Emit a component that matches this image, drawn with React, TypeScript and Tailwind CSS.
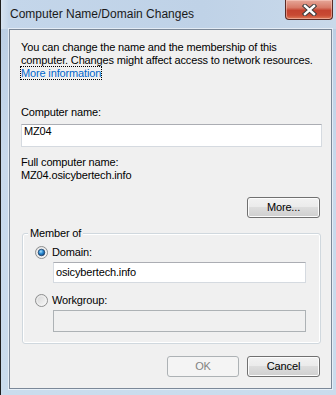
import React from "react";

function Radio({ checked }: { checked?: boolean }) {
  return (
    <svg width="13" height="13" viewBox="0 0 13 13" className="shrink-0">
      <defs>
        <linearGradient id={checked ? "rbg1" : "rbg0"} x1="0" y1="0" x2="1" y2="1">
          <stop offset="0" stopColor="#d2d2d2" />
          <stop offset="1" stopColor="#fbfbfb" />
        </linearGradient>
        <radialGradient id="rdot" cx="0.4" cy="0.35" r="0.7">
          <stop offset="0" stopColor="#a9e0fb" />
          <stop offset="0.45" stopColor="#2f8fd6" />
          <stop offset="1" stopColor="#0c3f7a" />
        </radialGradient>
      </defs>
      <circle cx="6.5" cy="6.5" r="6" fill={`url(#${checked ? "rbg1" : "rbg0"})`} stroke="#8e8f8f" strokeWidth="1" />
      <circle cx="6.5" cy="6.5" r="4.6" fill="none" stroke="#f4f4f4" strokeWidth="0.8" />
      {checked && <circle cx="6.5" cy="6.5" r="3.3" fill="url(#rdot)" stroke="#1b3a5e" strokeWidth="0.7" />}
    </svg>
  );
}

function WinButton({ label, disabled, className = "" }: { label: string; disabled?: boolean; className?: string }) {
  if (disabled) {
    return (
      <div
        className={`h-[21px] rounded-[3px] border border-[#adb2b5] bg-[#f4f4f4] flex items-center justify-center text-[#838383] ${className}`}
      >
        {label}
      </div>
    );
  }
  return (
    <div
      className={`h-[21px] rounded-[3px] border border-[#707070] bg-[linear-gradient(to_bottom,#f2f2f2_0%,#ebebeb_45%,#dddddd_50%,#cfcfcf_100%)] shadow-[inset_0_0_0_1px_#fcfcfc] flex items-center justify-center text-black ${className}`}
    >
      {label}
    </div>
  );
}

export default function App() {
  return (
    <div className="w-[336px] h-[395px] overflow-hidden flex flex-col border-l border-[#1e1e1e] bg-[linear-gradient(to_bottom,#b9cde3_0%,#c8d9ec_40%,#cadced_100%)] font-['Liberation_Sans',Arial,sans-serif] select-none">
      {/* Title bar */}
      <div className="h-[29px] flex items-start shrink-0 bg-[linear-gradient(to_right,#d6e3f1_0px,#c4d6ea_8px,#bfd2e7_60%,#c9d9ea_100%)]">
        <div className="pl-[9px] pt-[7px] text-[12px] leading-[15px] text-[#1a1a1a]">Computer Name/Domain Changes</div>
        <div className="ml-auto mr-[3px] w-[48px] h-[20px] rounded-b-[4px] border border-t-0 border-[#5a2a24] bg-[linear-gradient(to_bottom,#e6a799_0%,#d77a67_40%,#c4432f_55%,#c84a33_80%,#dd7a57_100%)] shadow-[inset_0_0_0_1px_rgba(255,220,210,0.45)] flex items-center justify-center">
          <svg width="15" height="12" viewBox="0 0 15 12">
            <path d="M3 2 L12 10 M12 2 L3 10" stroke="#3b3b3b" strokeWidth="4.4" strokeLinecap="square" />
            <path d="M3 2 L12 10 M12 2 L3 10" stroke="#ffffff" strokeWidth="2.4" strokeLinecap="square" />
          </svg>
        </div>
      </div>

      {/* Client area */}
      <div className="ml-[8px] w-[323px] h-[360px] shrink-0 border border-[#7b8898] shadow-[0_0_0_1px_rgba(255,255,255,0.55)] bg-[#f0f0f0] pl-[11px] pr-[9px] pt-[11px] flex flex-col text-[11px] leading-[13px] tracking-[-0.15px] text-black">
        <p>
          You can change the name and the membership of this computer. Changes might affect access to network resources.{" "}
          <span className="outline outline-1 outline-dotted outline-black text-[#0066cc]">More information</span>
        </p>

        <div className="mt-[26px]">Computer name:</div>
        <div className="mt-[5px] h-[23px] border border-[#d5dae0] border-t-[#abadb3] bg-white pl-[2px]">MZ04</div>

        <div className="mt-[9px]">Full computer name:</div>
        <div>MZ04.osicybertech.info</div>

        <div className="mt-[15px] flex justify-end pr-[2px]">
          <WinButton label="More..." className="w-[73px]" />
        </div>

        {/* Group box */}
        <div className="relative mt-[15px] ml-[1px] mr-[1px] rounded-[3px] border border-[#d0d8de] shadow-[inset_0_0_0_1px_#ffffff] pl-[12px] pr-[14px] pt-[12px] pb-[11px] flex flex-col">
          <div className="absolute -top-[7px] left-[5px] px-[2px] bg-[#f0f0f0]">Member of</div>
          <div className="flex items-center gap-[4px]">
            <Radio checked />
            <span>Domain:</span>
          </div>
          <div className="mt-[3px] ml-[18px] h-[21px] border border-[#d5dae0] border-t-[#abadb3] bg-white pl-[2px] flex items-center">
            osicybertech.info
          </div>
          <div className="mt-[11px] flex items-center gap-[4px]">
            <Radio />
            <span>Workgroup:</span>
          </div>
          <div className="mt-[3px] ml-[18px] h-[22px] border border-[#adb2b5] bg-[#f0f0f0]" />
        </div>

        <div className="mt-[12px] flex justify-end gap-[8px] pr-[2px]">
          <WinButton label="OK" disabled className="w-[72px]" />
          <WinButton label="Cancel" className="w-[73px]" />
        </div>
      </div>
      <div className="flex-1" />
    </div>
  );
}
